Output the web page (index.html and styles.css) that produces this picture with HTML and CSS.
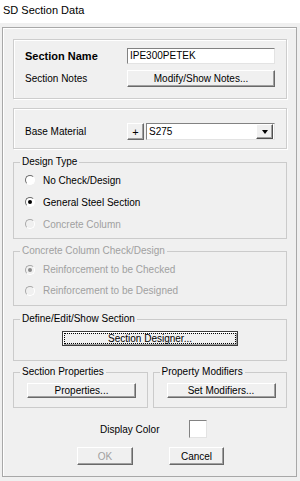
FILE: index.html
```html
<!DOCTYPE html>
<html lang="en">
<head>
  <meta charset="UTF-8" />
  <meta name="viewport" content="width=device-width, initial-scale=1.0"/>
  <title>SD Section Data</title>
  <link rel="stylesheet" href="styles.css">
</head>
<body>
  <div class="titlebar">SD Section Data</div>

  <div class="dialog">
    <div class="panel name-panel">
      <div class="row name-row">
        <span class="row-label name-label">Section Name</span>
        <div class="textbox">IPE300PETEK</div>
      </div>
      <div class="row">
        <span class="row-label">Section Notes</span>
        <button class="btn notes-btn">Modify/Show Notes...</button>
      </div>
    </div>

    <div class="panel material-panel">
      <div class="row">
        <span class="row-label">Base Material</span>
        <button class="btn plus-btn">+</button>
        <div class="combo">
          <span class="combo-value">S275</span>
          <span class="combo-arrow"></span>
        </div>
      </div>
    </div>

    <fieldset class="group design-group">
      <legend>Design Type</legend>
      <div class="radio"><span class="radio-dot"></span>No Check/Design</div>
      <div class="radio checked"><span class="radio-dot"></span>General Steel Section</div>
      <div class="radio disabled"><span class="radio-dot"></span>Concrete Column</div>
    </fieldset>

    <fieldset class="group concrete-group disabled-group">
      <legend>Concrete Column Check/Design</legend>
      <div class="radio disabled checked"><span class="radio-dot"></span>Reinforcement to be Checked</div>
      <div class="radio disabled"><span class="radio-dot"></span>Reinforcement to be Designed</div>
    </fieldset>

    <fieldset class="group define-group">
      <legend>Define/Edit/Show Section</legend>
      <div class="center">
        <button class="btn designer-btn">Section Designer...</button>
      </div>
    </fieldset>

    <div class="split">
      <fieldset class="group half-group">
        <legend>Section Properties</legend>
        <button class="btn half-btn">Properties...</button>
      </fieldset>
      <fieldset class="group half-group">
        <legend>Property Modifiers</legend>
        <button class="btn half-btn">Set Modifiers...</button>
      </fieldset>
    </div>

    <div class="color-row">
      <span>Display Color</span>
      <span class="swatch"></span>
    </div>

    <div class="actions">
      <button class="btn ok-btn" disabled>OK</button>
      <button class="btn cancel-btn">Cancel</button>
    </div>
  </div>
</body>
</html>
```

FILE: styles.css
```css
* {
  box-sizing: border-box;
}

body {
  margin: 0;
  background-color: #f0f0f0;
  color: #000;
  font-family: "Liberation Sans", Arial, sans-serif;
  font-size: 10px;
}

.titlebar {
  height: 23px;
  line-height: 21px;
  padding-left: 3px;
  background-color: #fff;
  font-size: 11px;
}

.dialog {
  margin: 4px 3px 4px 2px;
  padding: 11px 9px 11px 10px;
  border: 1px solid #a8a8a8;
  box-shadow: inset 1px 1px 0 #fff;
  display: flex;
  flex-direction: column;
}

.panel {
  border: 1px solid #cdcdcd;
  box-shadow: inset 1px 1px 0 #fff, 1px 1px 0 #fff;
}

.row {
  display: flex;
  align-items: center;
}

.row-label {
  width: 102px;
}

.name-panel {
  height: 60px;
  padding: 8px 0 0 11px;
  display: flex;
  flex-direction: column;
  gap: 6px;
}

.name-row {
  height: 16px;
}

.name-label {
  font-weight: bold;
  font-size: 11px;
}

.textbox {
  width: 148px;
  height: 16px;
  line-height: 14px;
  padding-left: 2px;
  background-color: #fff;
  border: 1px solid;
  border-color: #828282 #e3e3e3 #e3e3e3 #828282;
}

.btn {
  display: flex;
  align-items: center;
  justify-content: center;
  padding: 0;
  background-color: #f0f0f0;
  color: #000;
  font: inherit;
  border: 1px solid;
  border-color: #fff #696969 #696969 #fff;
  box-shadow: inset -1px -1px 0 #a0a0a0;
}

.btn:disabled {
  color: #a0a0a0;
}

.notes-btn {
  width: 148px;
  height: 17px;
}

.material-panel {
  height: 41px;
  margin-top: 9px;
  padding: 14px 0 0 11px;
}

.plus-btn {
  width: 17px;
  height: 17px;
  font-size: 11px;
}

.combo {
  width: 129px;
  height: 17px;
  margin-left: 2px;
  padding: 0 1px 0 2px;
  display: flex;
  align-items: center;
  background-color: #fff;
  border: 1px solid;
  border-color: #828282 #e3e3e3 #e3e3e3 #828282;
}

.combo-value {
  flex: 1;
}

.combo-arrow {
  width: 17px;
  height: 15px;
  display: flex;
  align-items: center;
  justify-content: center;
  background-color: #f0f0f0;
  border: 1px solid;
  border-color: #fff #505050 #505050 #fff;
  box-shadow: inset -1px -1px 0 #a0a0a0;
}

.combo-arrow::before {
  content: "";
  border-left: 3.5px solid transparent;
  border-right: 3.5px solid transparent;
  border-top: 4px solid #000;
}

.group {
  margin: 0;
  min-width: 0;
  border: 1px solid #cbcbcb;
}

.group legend {
  margin-left: 6px;
  padding: 0 2px;
  line-height: 12px;
}

.disabled-group legend {
  color: #a0a0a0;
}

.design-group {
  height: 83px;
  margin-top: 7px;
  padding: 1px 0 0 0;
}

.concrete-group {
  height: 61px;
  margin-top: 6px;
  padding: 2px 0 0 0;
}

.radio {
  height: 22px;
  padding-left: 11px;
  display: flex;
  align-items: center;
}

.concrete-group .radio {
  height: 21px;
}

.radio-dot {
  width: 10px;
  height: 10px;
  margin-right: 8px;
  border-radius: 50%;
  border: 1.5px solid;
  border-color: #6a6a6a #fff #fff #6a6a6a;
  background-color: #fff;
  display: flex;
  align-items: center;
  justify-content: center;
}

.radio.checked .radio-dot::after {
  content: "";
  width: 4px;
  height: 4px;
  border-radius: 50%;
  background-color: #000;
}

.radio.disabled {
  color: #a0a0a0;
}

.radio.disabled .radio-dot {
  border-color: #a8a8a8 #fff #fff #a8a8a8;
  background-color: #f0f0f0;
}

.radio.disabled.checked .radio-dot::after {
  background-color: #8a8a8a;
}

.define-group {
  height: 48px;
  margin-top: 7px;
  padding: 6px 0 0 0;
}

.center {
  display: flex;
  justify-content: center;
}

.designer-btn {
  width: 176px;
  height: 15px;
  border: 1px solid #3c3c3c;
  box-shadow: inset 1px 1px 0 #fff, inset -1px -1px 0 #a0a0a0;
  outline: 1px dotted #000;
  outline-offset: -3px;
}

.split {
  margin-top: 5px;
  display: flex;
  gap: 5px;
}

.half-group {
  width: 135px;
  height: 42px;
  padding: 5px 0 0 0;
}

.half-btn {
  width: 109px;
  height: 15px;
  margin-left: 13px;
}

.color-row {
  height: 18px;
  margin-top: 12px;
  padding-left: 87px;
  display: flex;
  align-items: center;
  gap: 30px;
}

.swatch {
  width: 18px;
  height: 18px;
  background-color: #fff;
  border: 1px solid;
  border-color: #828282 #e3e3e3 #e3e3e3 #828282;
}

.actions {
  height: 18px;
  margin-top: 9px;
  padding-left: 64px;
  display: flex;
  gap: 36px;
}

.ok-btn {
  width: 56px;
  height: 18px;
}

.cancel-btn {
  width: 55px;
  height: 18px;
}
```
